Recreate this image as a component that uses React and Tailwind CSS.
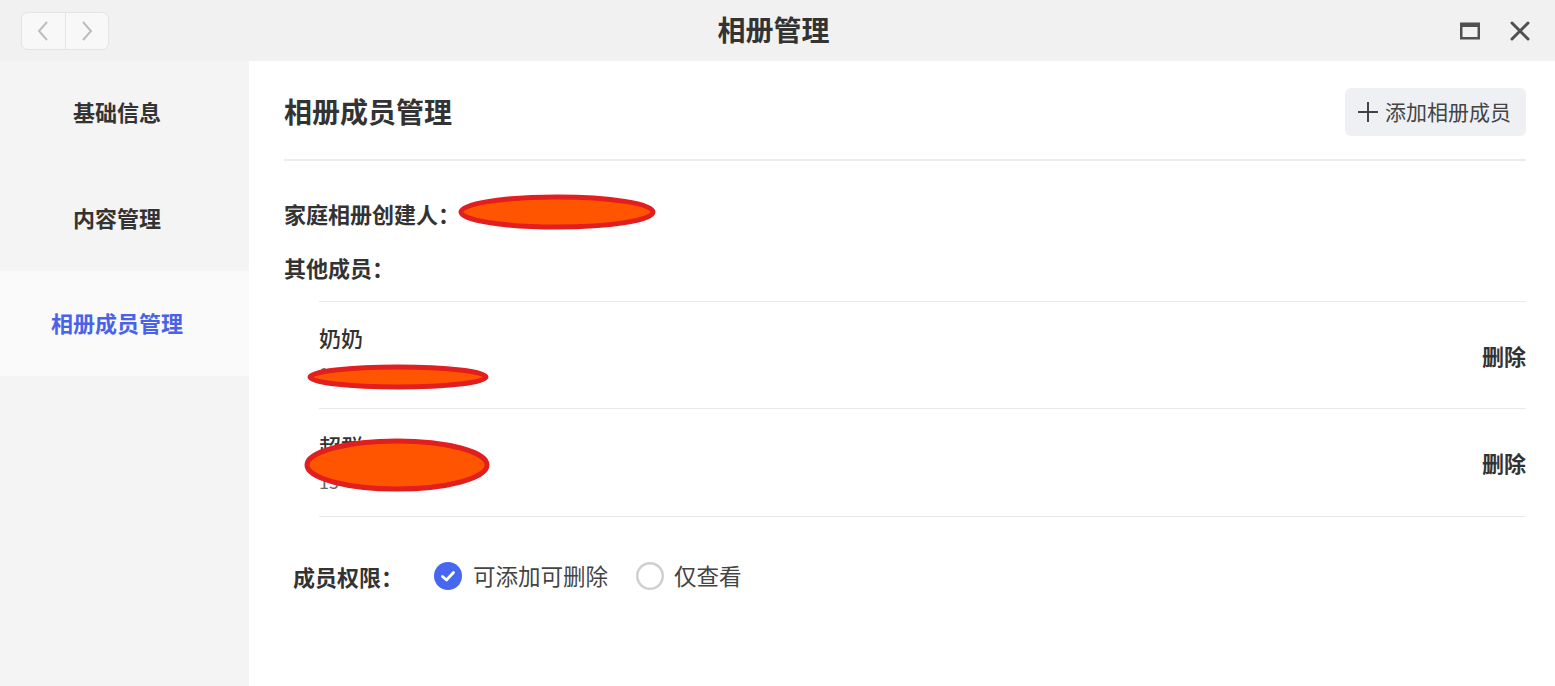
import React from "react";

const font = { fontFamily: '"Noto Sans CJK SC", "Noto Sans", sans-serif' };

function Redact({ className, rx, ry, sw = 5 }) {
  const w = rx * 2 + sw * 2;
  const h = ry * 2 + sw * 2;
  return (
    <svg className={"absolute pointer-events-none " + className} width={w} height={h} viewBox={`0 0 ${w} ${h}`}>
      <ellipse cx={w / 2} cy={h / 2} rx={rx} ry={ry} fill="#ff5500" stroke="#e21e1e" strokeWidth={sw} />
    </svg>
  );
}

function MemberRow({ name, sub, redact, h }) {
  return (
    <div className={"relative flex items-center justify-between border-b border-[#e8e8e8] " + h}>
      <div className="flex flex-col gap-2">
        <div className="text-[22px] leading-[28px] font-medium text-[#333]">{name}</div>
        <div className="text-[18px] leading-[28px] text-[#666]">{sub}</div>
      </div>
      <div className="text-[22px] font-bold text-[#333]">删除</div>
      {redact}
    </div>
  );
}

export default function App() {
  return (
    <div style={font} className="w-[1555px] h-[686px] flex flex-col bg-white overflow-hidden text-[#333]">
      {/* Title bar */}
      <div className="relative h-[61px] flex items-center bg-[#f1f1f1] px-[21px]">
        <div className="flex h-[38px] w-[88px] rounded-[7px] border border-[#e4e4e4] bg-[#f8f8f8] overflow-hidden">
          <div className="flex-1 flex items-center justify-center border-r border-[#e4e4e4]">
            <svg width="14" height="22" viewBox="0 0 14 22"><path d="M11 2 L3 11 L11 20" fill="none" stroke="#bdbdbd" strokeWidth="2" /></svg>
          </div>
          <div className="flex-1 flex items-center justify-center">
            <svg width="14" height="22" viewBox="0 0 14 22"><path d="M3 2 L11 11 L3 20" fill="none" stroke="#bdbdbd" strokeWidth="2" /></svg>
          </div>
        </div>
        <div className="absolute left-0 right-0 top-0 h-[61px] flex items-center justify-center pointer-events-none pr-[8px] pb-[4px]">
          <span className="text-[28px] font-bold text-[#333]">相册管理</span>
        </div>
        <div className="ml-auto flex items-center gap-[30px] pr-[4px]">
          <svg width="20" height="18" viewBox="0 0 20 18">
            <rect x="1.25" y="1.75" width="17.5" height="14.5" fill="none" stroke="#505050" strokeWidth="2.5" />
            <rect x="1" y="1" width="18" height="4" fill="#505050" />
          </svg>
          <svg width="20" height="20" viewBox="0 0 20 20">
            <path d="M2 2 L18 18 M18 2 L2 18" stroke="#505050" strokeWidth="3" strokeLinecap="round" />
          </svg>
        </div>
      </div>

      <div className="flex flex-1">
        {/* Sidebar */}
        <div className="w-[249px] bg-[#f4f4f4] flex flex-col">
          <div className="h-[105px] flex items-center justify-center text-[22px] font-bold text-[#333] pr-[15px] pb-[4px]">基础信息</div>
          <div className="h-[105px] flex items-center justify-center text-[22px] font-bold text-[#333] pr-[15px] pb-[2px]">内容管理</div>
          <div className="h-[105px] flex items-center justify-center text-[22px] font-bold text-[#4a63e6] bg-[#fafafa] pr-[15px] pb-[2px]">相册成员管理</div>
        </div>

        {/* Main */}
        <div className="flex-1 pl-[35px] pr-[29px]">
          <div className="h-[100px] pt-[2px] flex items-center justify-between border-b-2 border-[#ececec]">
            <div className="text-[28px] font-bold text-[#333]">相册成员管理</div>
            <button className="h-[48px] mt-[2px] pl-[12px] pr-[15px] rounded-[6px] bg-[#eef0f4] flex items-center gap-[6px] text-[21px] text-[#444]">
              <svg width="22" height="22" viewBox="0 0 22 22"><path d="M11 1 V21 M1 11 H21" stroke="#444" strokeWidth="2" /></svg>
              添加相册成员
            </button>
          </div>

          <div className="relative mt-[36px] h-[32px] flex items-center text-[22px] font-bold text-[#333]">
            家庭相册创建人：
            <Redact className="left-[172px] top-[-5px]" rx={96} ry={15} />
          </div>
          <div className="mt-[22px] h-[32px] flex items-center text-[22px] font-bold text-[#333]">其他成员：</div>

          <div className="ml-[35px] mt-[18px] border-t border-[#e8e8e8]">
            <MemberRow
              h="h-[107px]"
              name="奶奶"
              sub="1"
              redact={<Redact className="left-[-14px] top-[60px]" rx={88} ry={10} />}
            />
            <MemberRow
              h="h-[108px]"
              name="超群"
              sub="15"
              redact={<Redact className="left-[-17px] top-[27px]" rx={90} ry={24} />}
            />
          </div>

          <div className="mt-[43px] ml-[9px] flex items-center h-[32px]">
            <span className="text-[22px] font-bold text-[#333] w-[141px]">成员权限：</span>
            <div className="flex items-center gap-[11px]">
              <svg width="28" height="28" viewBox="0 0 28 28">
                <circle cx="14" cy="14" r="14" fill="#4767ee" />
                <path d="M8.5 14.5 L12.5 18 L19.5 10.5" fill="none" stroke="#fff" strokeWidth="2.8" strokeLinecap="round" strokeLinejoin="round" />
              </svg>
              <span className="text-[22.5px] text-[#444]">可添加可删除</span>
            </div>
            <div className="flex items-center gap-[10px] ml-[28px]">
              <svg width="28" height="28" viewBox="0 0 28 28">
                <circle cx="14" cy="14" r="12.75" fill="#fff" stroke="#cfcfcf" strokeWidth="2.5" />
              </svg>
              <span className="text-[22.5px] text-[#444]">仅查看</span>
            </div>
          </div>
        </div>
      </div>
    </div>
  );
}
